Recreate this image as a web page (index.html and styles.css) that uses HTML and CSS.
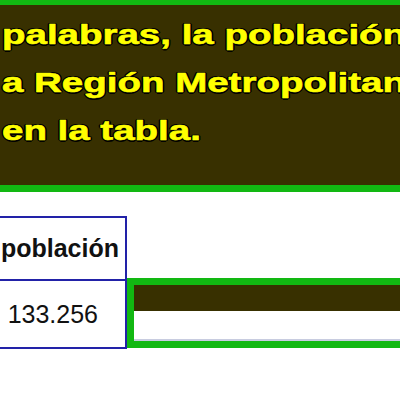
FILE: index.html
```html
<!DOCTYPE html>
<html lang="es">
<head>
<meta charset="utf-8">
<link rel="stylesheet" href="styles.css">
</head>
<body>
<div class="page">
  <div class="panel">
    <p class="line">palabras, la población de la</p>
    <p class="line">a Región Metropolitana</p>
    <p class="line">en la tabla.</p>
  </div>
  <div class="content">
    <div class="table">
      <div class="th">población</div>
      <div class="td">133.256</div>
    </div>
    <div class="answer">
      <div class="bar"></div>
      <div class="field"></div>
    </div>
  </div>
</div>
</body>
</html>
```
FILE: styles.css
```css
html, body {
  margin: 0;
  padding: 0;
  background: #ffffff;
}
.page {
  width: 400px;
  height: 400px;
  overflow: hidden;
  font-family: "Liberation Sans", Arial, sans-serif;
}
.panel {
  background: #383000;
  border-top: 5px solid #12b812;
  border-bottom: 7px solid #12b812;
  padding: 5px 0 31px 2px;
  overflow: hidden;
}
.line {
  margin: 0;
  font-size: 28.5px;
  font-weight: bold;
  line-height: 48px;
  color: #ffff00;
  white-space: nowrap;
  transform: scaleX(1.35);
  transform-origin: 0 0;
  -webkit-text-stroke: 0.6px #ffff00;
  text-shadow: 1px 1px 0 #000, -1px -1px 0 #000, 1px -1px 0 #000, -1px 1px 0 #000, 0 1.5px 0 #000, 1.5px 0 0 #000, 0 -1.5px 0 #000, -1.5px 0 0 #000;
}
.content {
  display: flex;
  margin-top: 24px;
  margin-right: -20px;
}
.table {
  width: 125px;
  flex: none;
  border-top: 2px solid #2222a8;
  border-right: 2px solid #2222a8;
  border-bottom: 2px solid #2222a8;
  color: #111;
}
.th {
  height: 61px;
  border-bottom: 2px solid #2222a8;
  font-size: 25px;
  font-weight: bold;
  display: flex;
  align-items: center;
  justify-content: flex-end;
  padding-right: 6px;
}
.td {
  height: 66px;
  font-size: 25px;
  display: flex;
  align-items: center;
  justify-content: flex-end;
  padding-right: 27px;
}
.answer {
  flex: 1;
  margin-top: 62px;
  align-self: flex-start;
  border: 7px solid #12b812;
}
.bar {
  height: 26px;
  background: #383000;
}
.field {
  height: 28px;
  background: #fff;
  border-bottom: 2px solid #c8cce0;
}
```
